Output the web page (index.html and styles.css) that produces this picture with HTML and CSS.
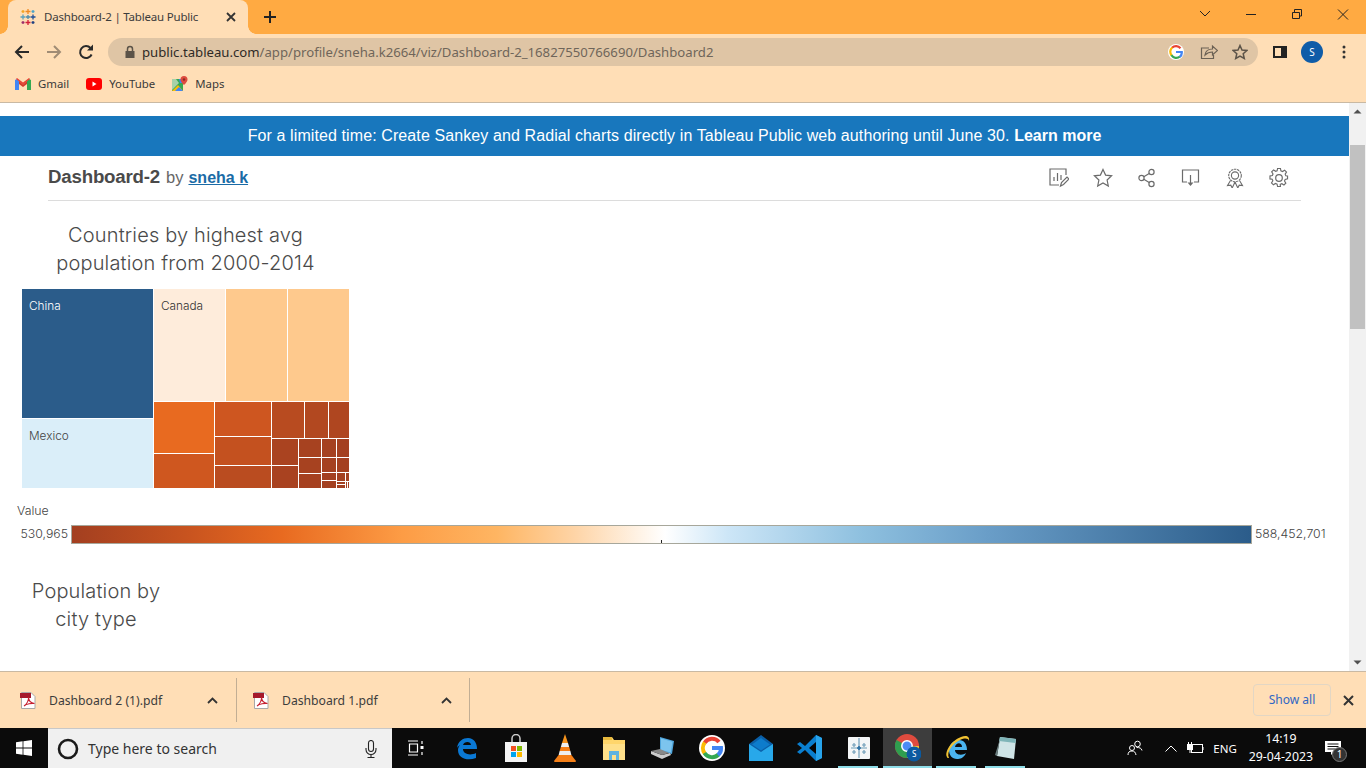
FILE: index.html
```html
<!DOCTYPE html>
<html lang="en">
<head>
<meta charset="utf-8">
<title>Dashboard-2 | Tableau Public</title>
<link rel="stylesheet" href="styles.css">
</head>
<body>
<div class="tabstrip">
  <div class="tab">
    <svg class="fav" width="16" height="16" viewBox="0 0 16 16" fill="none" stroke-width="1.300">
      <path d="M8 0v5M5.500 2.500h5" stroke="#f08a24"/><path d="M8 11v5M5.500 13.500h5" stroke="#d31f3a"/>
      <path d="M0.500 8h5M3 5.500v5" stroke="#5aa0bd"/><path d="M10.500 8h5M13 5.500v5" stroke="#1f4f99"/>
      <path d="M3 1v3M1.500 2.500h3" stroke="#f5a623"/><path d="M13 1v3M11.500 2.500h3" stroke="#4aa3c7"/>
      <path d="M3 12v3M1.500 13.500h3" stroke="#9b2f6a"/><path d="M13 12v3M11.500 13.500h3" stroke="#1f3f80"/>
      <path d="M8 6v4M6 8h4" stroke="#4f8cab"/>
    </svg>
    <span class="tab-title">Dashboard-2 | Tableau Public</span>
    <svg class="tab-x" width="10" height="10" viewBox="0 0 10 10"><path d="M1 1l8 8M9 1l-8 8" stroke="#333" stroke-width="1.800"/></svg>
  </div>
  <svg class="newtab" width="14" height="14" viewBox="0 0 14 14"><path d="M7 1v12M1 7h12" stroke="#222" stroke-width="2"/></svg>
  <div class="winctl">
    <svg width="46" height="30" viewBox="0 0 46 30"><path d="M18 11l5 5 5-5" fill="none" stroke="#222"/></svg>
    <svg width="46" height="30" viewBox="0 0 46 30"><path d="M18 14.500h10" stroke="#222"/></svg>
    <svg width="46" height="30" viewBox="0 0 46 30"><path d="M18.500 12.500h7v6h-7zM20.500 12v-2.500h7v6.500h-2" fill="none" stroke="#222"/></svg>
    <svg width="46" height="30" viewBox="0 0 46 30"><path d="M18 9.500l10 10M28 9.500l-10 10" stroke="#222"/></svg>
  </div>
</div>

<div class="toolbar">
  <svg class="nav" width="16" height="16" viewBox="0 0 16 16"><path d="M15 8H2M8 2L2 8l6 6" fill="none" stroke="#2a2a2a" stroke-width="2"/></svg>
  <svg class="nav" width="16" height="16" viewBox="0 0 16 16"><path d="M1 8h13M8 2l6 6-6 6" fill="none" stroke="#a08c75" stroke-width="2"/></svg>
  <svg class="nav" width="16" height="16" viewBox="0 0 16 16"><path d="M13.600 10.500A6 6 0 1 1 12.500 4" fill="none" stroke="#2a2a2a" stroke-width="2"/><path d="M9 6.500h6v-6z" fill="#2a2a2a"/></svg>
  <div class="omnibox">
    <svg class="lock" width="12" height="14" viewBox="0 0 12 14"><path d="M3.500 6V4a2.500 2.500 0 0 1 5 0v2" fill="none" stroke="#5b5348" stroke-width="1.500"/><rect x="1.500" y="6" width="9" height="7" fill="#5b5348"/></svg>
    <span class="url"><span class="url-host">public.tableau.com</span>/app/profile/sneha.k2664/viz/Dashboard-2_16827550766690/Dashboard2</span>
    <div class="omni-icons">
      <span class="gbadge">
        <svg width="14" height="14" viewBox="0 0 14 14" fill="none" stroke-width="2.200"><path d="M11.500 3.300A5.800 5.800 0 0 0 3 2.800" stroke="#ea4335"/><path d="M3.200 2.500A5.800 5.800 0 0 0 2.600 10.500" stroke="#fbbc05"/><path d="M2.400 10.200A5.800 5.800 0 0 0 11 11.500" stroke="#34a853"/><path d="M10.800 11.800A5.500 5.500 0 0 0 12.800 7H7" stroke="#4285f4"/></svg>
      </span>
      <svg width="18" height="16" viewBox="0 0 18 16"><path d="M9 4H1.500v10.500h12V11" fill="none" stroke="#6b6154" stroke-width="1.200"/><path d="M5 11c.5-4 3.500-6 7.500-6V2l5 4.500-5 4.500V8C9 8 7 9 5 11z" fill="none" stroke="#6b6154" stroke-width="1.200"/></svg>
      <svg width="16" height="16" viewBox="0 0 16 16"><path d="M8 1.500l2 4.500 4.800.5-3.600 3.200 1.100 4.800L8 12l-4.300 2.500 1.100-4.800L1.200 6.500 6 6z" fill="none" stroke="#5c5348" stroke-width="1.500"/></svg>
    </div>
  </div>
  <svg class="sidep" width="14" height="12" viewBox="0 0 14 12"><rect x="1" y="1" width="12" height="10" fill="none" stroke="#222" stroke-width="2"/><rect x="8" y="1" width="5" height="10" fill="#222"/></svg>
  <span class="avatar">S</span>
  <svg class="kebab" width="4" height="14" viewBox="0 0 4 14"><circle cx="2" cy="2" r="1.500" fill="#333"/><circle cx="2" cy="7" r="1.500" fill="#333"/><circle cx="2" cy="12" r="1.500" fill="#333"/></svg>
</div>

<div class="bookmarks">
  <span class="bm">
    <svg width="16" height="12" viewBox="0 0 16 12"><path d="M0 12V2l2 -1 2 2v9z" fill="#4285f4"/><path d="M12 12V3l2-2 2 1v10z" fill="#34a853"/><path d="M1 1l7 5.500L15 1l-1-1-6 4.500L2 0z" fill="#ea4335"/><path d="M4 3l4 3.500L12 3v3L8 9 4 6z" fill="#d33b2c"/></svg>
    Gmail
  </span>
  <span class="bm">
    <svg width="16" height="12" viewBox="0 0 16 12"><rect width="16" height="12" rx="3" fill="#f00"/><path d="M6.500 3.500v5l4-2.500z" fill="#fff"/></svg>
    YouTube
  </span>
  <span class="bm">
    <svg width="16" height="16" viewBox="0 0 16 16"><path d="M0 3h11v12H0z" fill="#35a853"/><path d="M0 15l6-6 5 6z" fill="#fbbc05"/><path d="M3 15l4-4 4 4z" fill="#4285f4"/><path d="M0 3h4l3 4-7 7z" fill="#a6d1a8"/><path d="M7 3h4v4H8z" fill="#4285f4"/><path d="M12 0a3.500 3.500 0 0 0-3.500 3.500C8.500 6 12 9 12 9s3.500-3 3.500-5.500A3.500 3.500 0 0 0 12 0z" fill="#dd4b3e"/><circle cx="12" cy="3.500" r="1.200" fill="#8a2c24"/></svg>
    Maps
  </span>
</div>

<div class="viewport">
  <main class="page">
    <div class="banner"><span class="banner-text">For a limited time: Create Sankey and Radial charts directly in Tableau Public web authoring until June 30. </span><b>Learn more</b></div>
    <header class="vizhead">
      <div class="vizname"><strong>Dashboard-2</strong><span class="by">by</span><a class="author">sneha k</a></div>
      <div class="vizicons">
        <svg width="20" height="20" viewBox="0 0 20 20" fill="none" stroke="#6b6b6b" stroke-width="1.200"><path d="M17 7V1H1v16h9"/><path d="M5 13V9M8.500 13V5M12 12V7"/><path d="M11.500 18l1-3.500 5.500-5.500 2 2-5.500 5.500z"/></svg>
        <svg width="20" height="20" viewBox="0 0 20 20" fill="none" stroke="#6b6b6b" stroke-width="1.200"><path d="M10 1.500l2.600 5.600 6 .7-4.500 4.200 1.200 6L10 15l-5.300 3 1.200-6L1.400 7.800l6-.7z"/></svg>
        <svg width="20" height="20" viewBox="0 0 20 20" fill="none" stroke="#6b6b6b" stroke-width="1.200"><circle cx="4.500" cy="10" r="2.600"/><circle cx="14.500" cy="4" r="2.600"/><circle cx="14.500" cy="16" r="2.600"/><path d="M6.800 8.700l5.400-3.300M6.800 11.300l5.400 3.300"/></svg>
        <svg width="20" height="20" viewBox="0 0 20 20" fill="none" stroke="#6b6b6b" stroke-width="1.200"><path d="M6 14H1.500V2h16v12H13"/><path d="M9.500 7v8"/><path d="M6.500 14.500h6l-3 3.500z" fill="#6b6b6b" stroke="none"/></svg>
        <svg width="20" height="20" viewBox="0 0 20 20" fill="none" stroke="#6b6b6b" stroke-width="1.100"><circle cx="10" cy="7.500" r="6.300" stroke-dasharray="2.400 0.700"/><circle cx="10" cy="7.500" r="3.600"/><path d="M5.500 12.500L2.500 17.500l3.300-.3 1.400 2.800 2.800-6M14.500 12.500l3 5-3.300-.3-1.400 2.800-2.800-6"/></svg>
        <svg width="20" height="20" viewBox="0 0 20 20" fill="none" stroke="#6b6b6b" stroke-width="1.200"><circle cx="10" cy="10" r="3.300"/><path d="M8.500 1h3l.5 2.500 1.700.7 2.200-1.400 2 2-1.400 2.200.7 1.700L19 9v3l-2.500.5-.7 1.700 1.400 2.200-2 2-2.200-1.400-1.700.7L11.500 20h-3L8 17.500l-1.700-.7-2.200 1.400-2-2 1.400-2.200-.7-1.700L.500 12V9L3 8.500l.7-1.700L2.300 4.600l2-2 2.200 1.400L8 3.500z" transform="translate(.5 -.5) scale(.95)"/></svg>
      </div>
    </header>

    <section class="dash">
      <h2 class="chart-title title-tree">Countries by highest avg<br>population from 2000-2014</h2>
      <svg class="treemap" width="327" height="199" viewBox="22 289 327 199">
        <g class="cells">
          <rect x="22" y="289" width="131" height="129" fill="#2b5c8a"/>
          <rect x="22" y="419" width="131" height="69" fill="#daeef9"/>
          <rect x="154" y="289" width="71" height="112" fill="#feecdb"/>
          <rect x="226" y="289" width="61" height="112" fill="#fec98d"/>
          <rect x="288" y="289" width="61" height="112" fill="#fec98d"/>
          <rect x="154" y="402" width="60" height="51" fill="#e86a20"/>
          <rect x="154" y="454" width="60" height="34" fill="#cf571f"/>
          <rect x="215" y="402" width="56" height="34" fill="#ce5620"/>
          <rect x="215" y="437" width="56" height="28" fill="#c4511f"/>
          <rect x="215" y="466" width="56" height="22" fill="#ba4c20"/>
          <rect x="272" y="402" width="32" height="36" fill="#b84b20"/>
          <rect x="305" y="402" width="23" height="36" fill="#b24820"/>
          <rect x="329" y="402" width="20" height="36" fill="#af4620"/>
          <rect x="272" y="439" width="26" height="26" fill="#aa4320"/>
          <rect x="272" y="466" width="26" height="22" fill="#a94220"/>
          <rect x="299" y="439" width="22" height="18" fill="#a74220"/>
          <rect x="299" y="458" width="22" height="15" fill="#a74220"/>
          <rect x="299" y="474" width="22" height="14" fill="#a64120"/>
          <rect x="322" y="439" width="14" height="18" fill="#a54120"/>
          <rect x="322" y="458" width="14" height="14" fill="#a54120"/>
          <rect x="322" y="473" width="14" height="7" fill="#a44020"/>
          <rect x="322" y="481" width="14" height="7" fill="#a44020"/>
          <rect x="337" y="439" width="12" height="18" fill="#a44020"/>
          <rect x="337" y="458" width="12" height="14" fill="#a44020"/>
          <rect x="337" y="473" width="8" height="8" fill="#a34020"/>
          <rect x="346" y="473" width="3" height="8" fill="#a34020"/>
          <rect x="337" y="482" width="8" height="2" fill="#a34020"/>
          <rect x="337" y="485" width="8" height="3" fill="#a34020"/>
          <rect x="346" y="482" width="1" height="6" fill="#a34020"/>
          <rect x="348" y="482" width="1" height="6" fill="#a34020"/>
        </g>
        <text class="tm-label tm-light" x="29" y="310">China</text>
        <text class="tm-label" x="161" y="310">Canada</text>
        <text class="tm-label tm-mid" x="29" y="440">Mexico</text>
      </svg>

      <div class="legend">
        <div class="legend-title">Value</div>
        <div class="legend-row">
          <span class="legend-min">530,965</span>
          <div class="legend-bar"><i class="legend-tick"></i></div>
          <span class="legend-max">588,452,701</span>
        </div>
      </div>

      <h2 class="chart-title title-city">Population by<br>city type</h2>
    </section>
  </main>
  <aside class="scrollbar">
    <svg class="arrow" width="17" height="17" viewBox="0 0 17 17"><path d="M4.500 10.500L8.500 6.500l4 4z" fill="#505050"/></svg>
    <div class="thumb"></div>
    <svg class="arrow arrow-down" width="17" height="17" viewBox="0 0 17 17"><path d="M4.500 6.500L8.500 10.500l4-4z" fill="#505050"/></svg>
  </aside>
</div>

<div class="downloads">
  <div class="dl">
    <svg class="pdf" width="17" height="17" viewBox="0 0 17 17"><path d="M1.500 .5H11l4 4v12H1.500z" fill="#fff" stroke="#a8a8a8"/><rect x="0" y="1" width="11" height="5" fill="#a5192b"/><path d="M4 14c3-2 5-6 4.500-9 0 3 2 6 6 6.500-3-.5-8 .5-10.500 2.500z" fill="none" stroke="#c6202f" stroke-width="1.100"/></svg>
    <span class="dl-name">Dashboard 2 (1).pdf</span>
    <svg class="caret" width="11" height="7" viewBox="0 0 11 7"><path d="M1 6l4.500-4.500L10 6" fill="none" stroke="#333" stroke-width="1.800"/></svg>
  </div>
  <div class="dl dl-second">
    <svg class="pdf" width="17" height="17" viewBox="0 0 17 17"><path d="M1.500 .5H11l4 4v12H1.500z" fill="#fff" stroke="#a8a8a8"/><rect x="0" y="1" width="11" height="5" fill="#a5192b"/><path d="M4 14c3-2 5-6 4.500-9 0 3 2 6 6 6.500-3-.5-8 .5-10.500 2.500z" fill="none" stroke="#c6202f" stroke-width="1.100"/></svg>
    <span class="dl-name">Dashboard 1.pdf</span>
    <svg class="caret" width="11" height="7" viewBox="0 0 11 7"><path d="M1 6l4.500-4.500L10 6" fill="none" stroke="#333" stroke-width="1.800"/></svg>
  </div>
  <span class="showall">Show all</span>
  <svg class="dl-x" width="11" height="11" viewBox="0 0 11 11"><path d="M1 1l9 9M10 1l-9 9" stroke="#333" stroke-width="2"/></svg>
</div>

<footer class="taskbar">
  <span class="start">
    <svg width="16" height="16" viewBox="0 0 16 16"><path d="M0 2.300l6.600-1V7.500H0zM7.400 1.200L16 0v7.500H7.400zM0 8.400h6.600v6.300l-6.600-1zM7.400 8.400H16V16l-8.600-1.200z" fill="#fff"/></svg>
  </span>
  <div class="search">
    <svg width="22" height="22" viewBox="0 0 22 22"><circle cx="11" cy="11" r="9" fill="none" stroke="#1a1a1a" stroke-width="2.600"/></svg>
    <span class="search-text">Type here to search</span>
    <svg class="mic" width="12" height="18" viewBox="0 0 12 18" fill="none" stroke="#222" stroke-width="1.100"><rect x="3.500" y=".5" width="5" height="11" rx="2.500"/><path d="M1 8v1.500a5 5 0 0 0 10 0V8M6 14.500V17M2.500 17.500h7"/></svg>
  </div>
  <div class="tb-apps">
    <span class="tb tb-view"><svg width="16" height="16" viewBox="0 0 16 16" fill="none" stroke="#fff" stroke-width="1.200"><path d="M0 1h10M0 15h10M1.500 4h8v8h-8zM14 1v3M14 12v3"/><rect x="12.500" y="6" width="3" height="3" fill="#fff" stroke="none"/></svg></span>
    <span class="tb"><svg width="24" height="24" viewBox="0 0 24 24"><path d="M2 12C3 5 8 2 13 2c6 0 9 5 9 11H8c0 5 7 7 13 4v5c-8 3-18 1-18-8 0-2 1-4 2-5-1 1-2 1-3 3zM8 9h8c0-4-7-4-8 0z" fill="#0a78d4"/></svg></span>
    <span class="tb"><svg width="24" height="28" viewBox="0 0 24 28"><path d="M8 8V4.500a4 4 0 0 1 8 0V8" fill="none" stroke="#ccc" stroke-width="1.500"/><rect x="1" y="8" width="22" height="20" fill="#f4f4f4"/><rect x="7" y="12" width="5" height="5" fill="#f25022"/><rect x="13" y="12" width="5" height="5" fill="#7fba00"/><rect x="7" y="18" width="5" height="5" fill="#00a4ef"/><rect x="13" y="18" width="5" height="5" fill="#ffb900"/></svg></span>
    <span class="tb"><svg width="22" height="28" viewBox="0 0 22 28"><path d="M11 0l3 9H8z" fill="#f7941d"/><path d="M8 9h6l1.200 4H6.800z" fill="#eee"/><path d="M6.800 13h8.400l1.200 4H5.600z" fill="#f57f17"/><path d="M5.600 17h10.800l1 4H4.600z" fill="#eee"/><path d="M4.600 21h12.800L22 27a1 1 0 0 1 -1 1H1a1 1 0 0 1-1-1z" fill="#f57f17"/></svg></span>
    <span class="tb"><svg width="24" height="24" viewBox="0 0 24 24"><path d="M1 1h9l2 3h11v20H1z" fill="#ffd66b"/><rect x="1" y="1" width="9" height="3" fill="#e8b93d"/><path d="M1 8h22v16H1z" fill="#ffe08a"/><path d="M7 24v-9h10v9h-3v-5h-4v5z" fill="#5fb3e0"/></svg></span>
    <span class="tb"><svg width="26" height="24" viewBox="0 0 26 24"><path d="M10 1l14 4-2 13-12-3z" fill="#4fa5dc"/><path d="M11 2.500l11.500 3.300-1.700 10.700L11 14z" fill="#7cc4ee"/><path d="M1 15l11 4 8-2 1 2-9 4L1 18z" fill="#ccc"/><path d="M1 15l9-2 9 4-7 2z" fill="#888"/></svg></span>
    <span class="tb"><svg width="26" height="26" viewBox="0 0 26 26"><circle cx="13" cy="13" r="13" fill="#fff"/><path d="M20 7A9 9 0 0 0 5.500 8" fill="none" stroke="#ea4335" stroke-width="4"/><path d="M5.800 7.500a9 9 0 0 0 0 11" fill="none" stroke="#fbbc05" stroke-width="4"/><path d="M5.500 18A9 9 0 0 0 19.500 19.500" fill="none" stroke="#34a853" stroke-width="4"/><path d="M19 20a8.500 8.500 0 0 0 3-7H13" fill="none" stroke="#4285f4" stroke-width="4"/></svg></span>
    <span class="tb"><svg width="24" height="28" viewBox="0 0 24 28"><path d="M0 10L12 1l12 9v17H0z" fill="#0a5fa8"/><path d="M0 10l12 8 12-8v17H0z" fill="#28a8ea"/><path d="M3 10.500l9 6 9-6-9-6.500z" fill="#0d7ccc"/></svg></span>
    <span class="tb"><svg width="26" height="28" viewBox="0 0 26 28"><path d="M19 1l6 3v20l-6 3L8 16l-5 4-3-2 5-4-5-4 3-2 5 4z" fill="#0a7fd0"/><path d="M19 1v26l6-3V4z" fill="#27a4ec"/><path d="M19 8l-7 6 7 6z" fill="#050505"/></svg></span>
    <span class="tb tb-open"><svg width="22" height="22" viewBox="0 0 22 22"><rect width="22" height="22" rx="1" fill="#f4f6f7"/><path d="M11 3v16M3 11h16M6 6v4M4 8h4M16 6v4M14 8h4M6 13v4M4 15h4M16 13v4M14 15h4M11 1v3M11 18v3" stroke="#6f9db8" stroke-width="1.200"/><path d="M9 11h4M11 9v4" stroke="#2b6fa3" stroke-width="1.600"/></svg></span>
    <span class="tb tb-active"><svg width="26" height="28" viewBox="0 0 26 28"><circle cx="12" cy="12" r="12" fill="#de4b3e"/><path d="M12 12L1.600 6A12 12 0 0 0 12 24l6-10z" fill="#2f9e4f"/><path d="M12 12h12a12 12 0 0 1-12 12l6-10z" fill="#f7c52f"/><circle cx="12" cy="12" r="5.200" fill="#4b8bf5" stroke="#fff" stroke-width="1.500"/><circle cx="19" cy="20" r="7.500" fill="#0b5aa0"/></svg><span class="chrome-s">S</span></span>
    <span class="tb tb-open"><svg width="26" height="28" viewBox="0 0 26 28"><path d="M5 16c0-6 5-10 10-10s8 4 8 10H11c0 5 7 6 11 3-2 5-6 6-9 6-5 0-8-4-8-9zM11 13h7c0-5-6-5-7 0z" fill="#4bb4ef"/><path d="M3 23C0 18 8 6 17 3c5-2 9-1 8 4-1-3-4-3-9-1C9 9 2 18 5 24c-1 0-2 0-2-1z" fill="#f1c232"/></svg></span>
    <span class="tb tb-open"><svg width="24" height="26" viewBox="0 0 24 26"><path d="M6 2l16 2-2 20-17-3z" fill="#cfe4e6"/><path d="M6 2l16 2-.5 4L5 6z" fill="#7fb5b8"/><path d="M6 4L1 20l2 1z" fill="#6b7f80"/></svg></span>
  </div>
  <div class="tray">
    <svg class="tray-person" width="16" height="16" viewBox="0 0 16 16" fill="none" stroke="#fff"><circle cx="10.500" cy="4" r="2.800"/><circle cx="5" cy="8" r="2.500"/><path d="M1 15c0-2.500 1-4 4-4 2.500 0 3.500 1.500 4 4M9.500 7.500c3 0 5 .5 5.500 3"/></svg>
    <svg class="tray-up" width="12" height="7" viewBox="0 0 12 7"><path d="M.5 6.500L6 1l5.500 5.500" fill="none" stroke="#fff"/></svg>
    <svg class="tray-power" width="18" height="12" viewBox="0 0 18 12" fill="none" stroke="#fff"><rect x="5.500" y="2.500" width="11" height="8"/><path d="M17 5v3"/><rect x="1" y="2" width="6" height="6" fill="#fff" stroke="none"/><path d="M2.500 0v2M5.500 0v2M4 8v3"/></svg>
    <span class="tray-lang">ENG</span>
    <div class="clock"><span>14:19</span><span>29-04-2023</span></div>
    <span class="notif"><svg width="16" height="15" viewBox="0 0 16 15"><path d="M0 0h16v11H9l-3 3v-3H0z" fill="#fff"/><path d="M2.500 3h11M2.500 5.500h11M2.500 8h8" stroke="#111"/></svg><span class="notif-n">1</span></span>
  </div>
</footer>
</body>
</html>
```
FILE: styles.css
```css
* { box-sizing: border-box; }
html, body { margin: 0; padding: 0; }
body {
  width: 1366px; height: 768px; overflow: hidden;
  display: flex; flex-direction: column;
  background: #fff;
  font-family: "Noto Sans", "Open Sans", sans-serif;
}
svg { display: block; flex: none; }

/* tab strip */
.tabstrip { height: 34px; background: #ffaa42; display: flex; align-items: flex-end; flex: none; }
.tab {
  position: relative;
  width: 240px; height: 34px; margin-left: 8px; padding: 0 10px 0 12px;
  background: #ffdeb6; border-radius: 8px 8px 0 0;
  display: flex; align-items: center;
}
.tab::before, .tab::after {
  content: ""; position: absolute; bottom: 0; width: 8px; height: 8px;
}
.tab::before { left: -8px; background: radial-gradient(circle at 0 0, #ffaa42 7.500px, #ffdeb6 8px); }
.tab::after { right: -8px; background: radial-gradient(circle at 100% 0, #ffaa42 7.500px, #ffdeb6 8px); }
.tab-title { margin: 0 0 2px 8px; font-size: 11.500px; color: #3c3c3c; white-space: nowrap; flex: 1; letter-spacing: -.2px; }
.tab-x { margin-right: 2px; }
.newtab { margin: 0 0 10px 15px; }
.winctl { margin-left: auto; height: 34px; display: flex; width: 184px; align-self: flex-start; }

/* toolbar */
.toolbar { height: 34px; background: #ffdeb6; display: flex; align-items: center; flex: none; padding: 2px 0 0 14px; }
.nav { margin-right: 16px; }
.omnibox {
  width: 1150px; height: 28px; margin-left: -2px; padding: 0 10px 0 16px;
  background: #dfc5a5; border-radius: 14px;
  display: flex; align-items: center;
}
.url { margin-left: 6px; font-size: 13.170px; color: #6f655a; white-space: nowrap; }
.url-host { color: #2e2a25; }
.omni-icons { margin-left: auto; display: flex; align-items: center; gap: 14px; }
.gbadge { width: 16px; height: 16px; margin-right: 2px; border-radius: 50%; background: #fff; display: flex; align-items: center; justify-content: center; }
.sidep { margin-left: 15px; }
.avatar {
  width: 22px; height: 22px; margin-left: 14px; border-radius: 50%;
  background: #0f5ca8; color: #fff; font-size: 10px;
  display: flex; align-items: center; justify-content: center;
}
.kebab { margin-left: 19px; }

/* bookmarks */
.bookmarks {
  height: 35px; background: #ffdeb6; flex: none;
  border-bottom: 1px solid #c9b9a3;
  display: flex; align-items: center; gap: 17px; padding: 0 0 3px 15px;
}
.bm { display: flex; align-items: center; gap: 7px; font-size: 11.400px; color: #3a3a3a; }

/* page */
.viewport { flex: 1; min-height: 0; display: flex; }
.page { flex: 1; min-width: 0; padding-top: 13px; overflow: hidden; }
.banner {
  height: 40px; padding-bottom: 1px; background: #1877bd; color: #fff;
  display: flex; align-items: center; justify-content: center;
  font-family: "Liberation Sans", sans-serif; font-size: 16px; white-space: pre-wrap;
}
.banner-text { letter-spacing: .1px; }
.banner b { font-weight: 700; }
.vizhead {
  height: 45px; margin: 0 48px; padding-bottom: 2px; border-bottom: 1px solid #dcdcdc;
  display: flex; align-items: center; justify-content: space-between;
}
.vizname { display: flex; align-items: baseline; font-family: "Liberation Sans", sans-serif; color: #4a4a4a; }
.vizname strong { font-size: 18.700px; letter-spacing: -.2px; }
.by { margin-left: 6px; font-size: 16.500px; color: #666; }
.author { margin-left: 5px; font-size: 16px; font-weight: 700; color: #1a6ba6; text-decoration: underline; }
.vizicons { display: flex; gap: 24px; margin-right: 12px; margin-top: 2px; }

.dash { display: flex; flex-direction: column; align-items: flex-start; }
.chart-title {
  margin: 0; font-family: Inter, sans-serif; font-weight: 300; font-size: 20px;
  line-height: 28px; color: #4a4a4a; text-align: center; letter-spacing: .15px;
}
.title-tree { width: 327px; margin: 20px 0 0 22px; }
.treemap { margin: 12px 0 0 22px; }
.cells rect { shape-rendering: crispEdges; }
.tm-label { font-family: Inter, sans-serif; font-weight: 300; font-size: 11.800px; fill: #333; }
.tm-light { fill: #fff; }
.tm-mid { fill: #444; }
.legend { margin-top: 15px; width: 100%; font-family: Inter, sans-serif; font-weight: 300; font-size: 12.300px; color: #444; }
.legend-title { margin-left: 17px; line-height: 15px; }
.legend-row { display: flex; align-items: center; margin-top: 7px; height: 19px; }
.legend-min { width: 68px; text-align: right; margin-top: -2px; }
.legend-max { margin-left: 3px; white-space: nowrap; margin-top: -2px; }
.legend-bar {
  position: relative;
  width: 1181px; height: 19px; margin-left: 3px;
  border: 1px solid #a7a79b;
  background: linear-gradient(90deg, #a33f20 0%, #c9541f 10%, #e86a20 17.800%, #fd9c45 28%, #feb562 36%, #fed4a6 42.600%, #fff 50.300%, #cde6f7 55.600%, #8ec0df 67%, #6a9ec8 77.500%, #2b5c8a 100%);
}
.legend-tick { position: absolute; left: 589px; bottom: 0; width: 1px; height: 3px; background: #222; }
.title-city { width: 150px; margin: 33px 0 0 21px; }

/* scrollbar */
.scrollbar { width: 17px; background: #f1f1f1; display: flex; flex-direction: column; }
.thumb { height: 184px; margin: 25px 2px 0 1px; background: #c1c1c1; width: 15px; }
.arrow-down { margin-top: auto; }

/* downloads */
.downloads {
  height: 57px; flex: none; background: #ffdeb6;
  border-top: 1px solid #c9b9a3;
  display: flex; align-items: center;
}
.dl {
  width: 237px; height: 44px; padding: 0 18px 0 20px;
  border-right: 1px solid #c2ae94;
  display: flex; align-items: center;
}
.dl-second { width: 233px; padding: 0 17px 0 16px; }
.dl-name { margin-left: 12px; font-size: 12.200px; color: #3c3c3c; flex: 1; white-space: nowrap; }
.showall {
  margin-left: auto; width: 78px; height: 32px; margin-right: 12px; padding-bottom: 2px;
  border: 1px solid #e2d6c4; border-radius: 4px;
  color: #2f67c4; font-size: 12px;
  display: flex; align-items: center; justify-content: center;
}
.dl-x { margin-right: 12px; }

/* taskbar */
.taskbar { height: 40px; flex: none; background: #0b0b0b; display: flex; align-items: stretch; }
.start { width: 48px; display: flex; align-items: center; justify-content: center; }
.search {
  width: 344px; background: #f0f0f0; border-top: 1px solid #c8c8c8;
  display: flex; align-items: center; padding: 0 15px 0 9px;
}
.search-text { margin-left: 9px; font-size: 14px; color: #333; flex: 1; }
.tb-apps { display: flex; }
.tb { width: 49px; display: flex; align-items: center; justify-content: center; position: relative; }
.tb-view { width: 50px; padding-right: 2px; }
.tb-open::after, .tb-active::after {
  content: ""; position: absolute; left: 4px; right: 5px; bottom: 0; height: 2px; background: #8edde8;
}
.tb-active { background: #3d3d3d; }
.tb-active::after { left: 0; right: 0; }
.chrome-s { position: absolute; left: 29px; top: 20px; font-size: 8px; color: #fff; }
.tray { margin-left: auto; display: flex; align-items: center; color: #fff; font-size: 12px; }
.tray-person { margin-right: 22px; }
.tray-up { margin-right: 9px; }
.tray-power { margin-right: 9px; }
.tray-lang { margin-right: 12px; font-size: 11.500px; }
.clock { display: flex; flex-direction: column; align-items: center; line-height: 18px; margin-right: 12px; font-size: 12.300px; }
.notif { position: relative; margin-right: 25px; }
.notif-n {
  position: absolute; left: 7px; top: 6px; width: 15px; height: 15px; border-radius: 50%;
  background: #333; border: 1px solid #777; color: #fff; font-size: 10px;
  display: flex; align-items: center; justify-content: center;
}
```
